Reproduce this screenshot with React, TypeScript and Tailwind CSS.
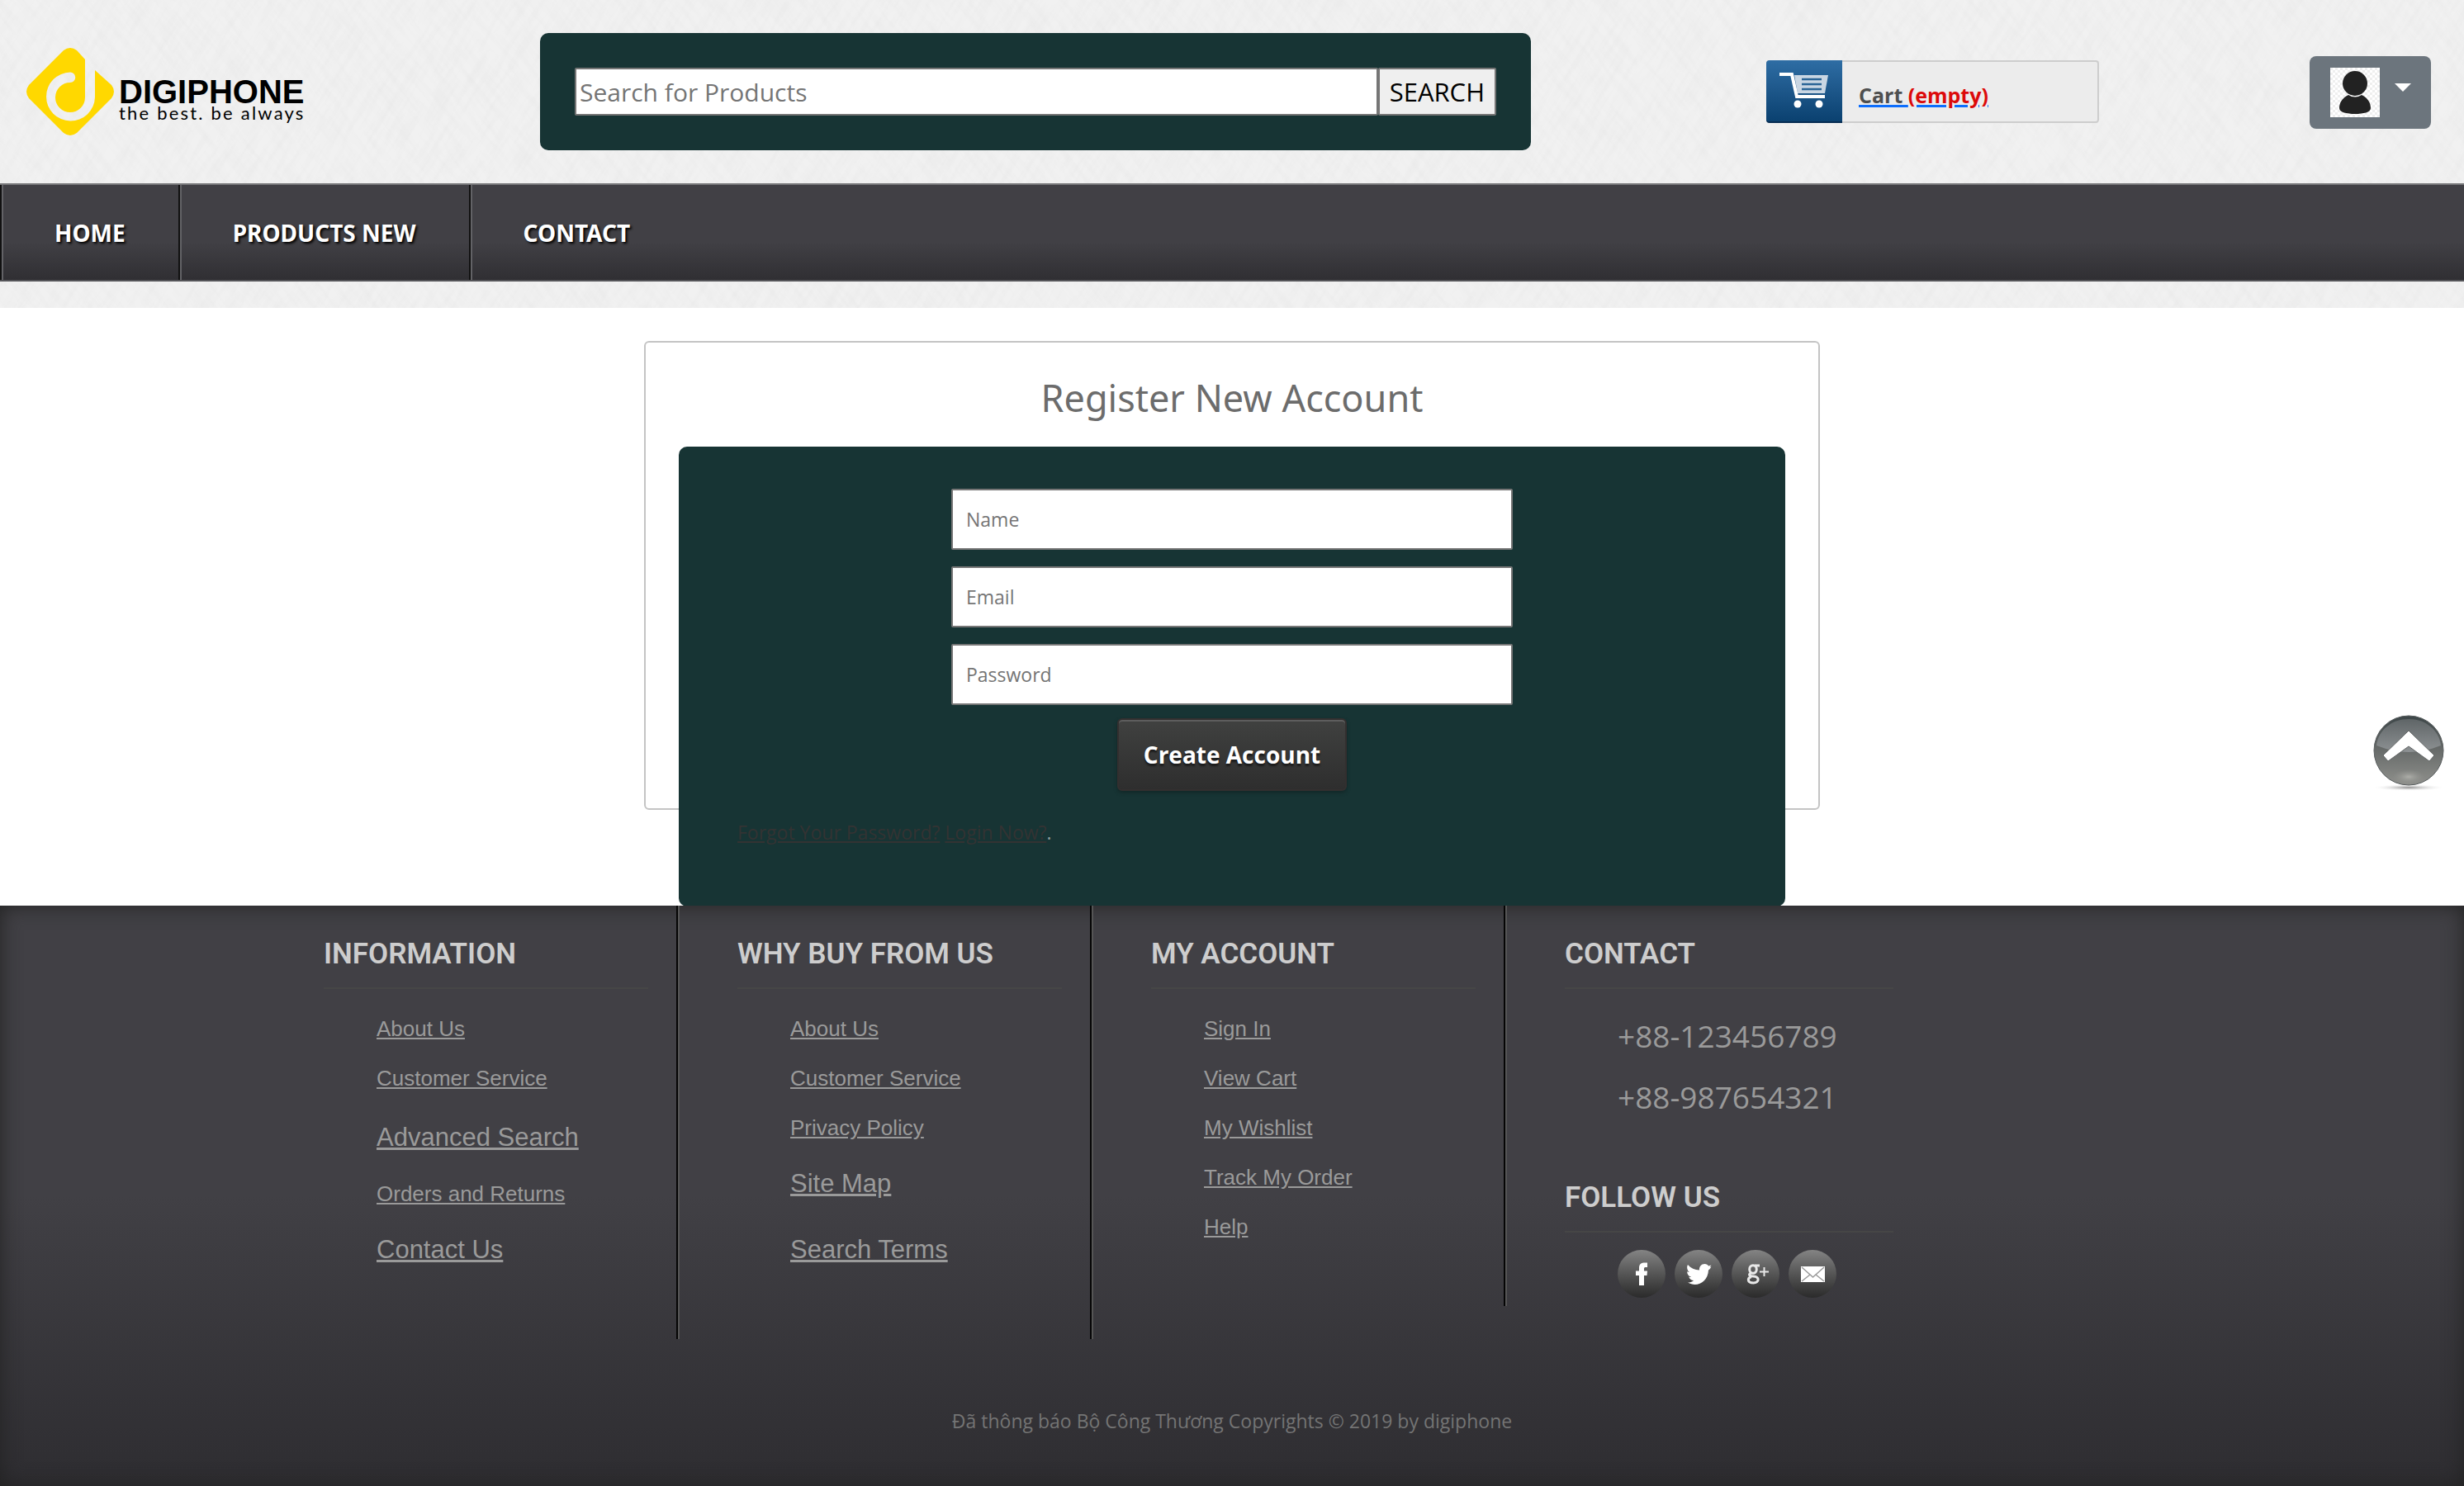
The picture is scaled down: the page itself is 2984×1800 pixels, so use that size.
import React from "react";

const sans = "font-['Open_Sans',sans-serif]";
const display = "font-['Noto_Sans',sans-serif]";

type FooterLink = { label: string; big?: boolean; gap: string };

const information: FooterLink[] = [
  { label: "About Us", gap: "mt-7" },
  { label: "Customer Service", gap: "mt-5" },
  { label: "Advanced Search", big: true, gap: "mt-7" },
  { label: "Orders and Returns", gap: "mt-6" },
  { label: "Contact Us", big: true, gap: "mt-6" },
];
const whyBuy: FooterLink[] = [
  { label: "About Us", gap: "mt-7" },
  { label: "Customer Service", gap: "mt-5" },
  { label: "Privacy Policy", gap: "mt-5" },
  { label: "Site Map", big: true, gap: "mt-6" },
  { label: "Search Terms", big: true, gap: "mt-8" },
];
const account: FooterLink[] = [
  { label: "Sign In", gap: "mt-7" },
  { label: "View Cart", gap: "mt-5" },
  { label: "My Wishlist", gap: "mt-5" },
  { label: "Track My Order", gap: "mt-5" },
  { label: "Help", gap: "mt-5" },
];

function Texture() {
  return (
    <svg className="absolute inset-0 -z-10 size-full" aria-hidden="true">
      <defs>
        <filter id="linen" x="0" y="0" width="100%" height="100%">
          <feTurbulence type="fractalNoise" baseFrequency="0.02 0.15" numOctaves="3" seed="4" stitchTiles="stitch" />
          <feColorMatrix values="0 0 0 0 0.72  0 0 0 0 0.72  0 0 0 0 0.72  2.4 0 0 0 -0.95" />
        </filter>
        <pattern id="linen-tile" width="512" height="512" patternUnits="userSpaceOnUse" patternTransform="rotate(-58)">
          <rect width="512" height="512" filter="url(#linen)" />
        </pattern>
        <pattern id="linen-cross" width="512" height="512" patternUnits="userSpaceOnUse" patternTransform="rotate(52)">
          <rect width="512" height="512" filter="url(#linen)" />
        </pattern>
      </defs>
      <rect width="100%" height="100%" fill="#f1f1f1" />
      <rect width="100%" height="100%" fill="url(#linen-tile)" opacity="0.18" />
      <rect width="100%" height="100%" fill="url(#linen-cross)" opacity="0.16" />
    </svg>
  );
}

function Logo() {
  return (
    <a href="#" className="flex w-[350px] items-center gap-1.5" aria-label="Digiphone home">
      <svg viewBox="0 0 106 106" className="size-[106px] shrink-0" aria-hidden="true">
        <path
          d="M45 3Q53-3 61 3L71 14V60A18 18 0 1 1 53 42A6 6 0 0 0 53 29.500A29.500 29.500 0 1 0 83 60V27L103 45Q109 53 103 61L61 103Q53 109 45 103L3 61Q-3 53 3 45Z"
          fill="#ffd800"
        />
      </svg>
      <span className="flex flex-col pt-5 font-['Liberation_Sans',sans-serif] text-black">
        <span className="text-[40px] leading-8 font-bold">DIGIPHONE</span>
        <span className="font-['Lato',sans-serif] text-[22px] leading-5 tracking-widest">the best. be always</span>
      </span>
    </a>
  );
}

function CartIcon() {
  return (
    <svg viewBox="0 0 60 44" className="h-11 w-[60px]" aria-hidden="true">
      <path d="M18 3H59L55 25H22Z" fill="#c9d6e3" />
      <path d="M27 8H51M27 14H51M27 20H51" stroke="#2a6496" strokeWidth="2.500" />
      <path d="M0 2H15L21 29H55" fill="none" stroke="#fff" strokeWidth="4" />
      <circle cx="22" cy="38" r="4.500" fill="#fff" />
      <circle cx="48" cy="38" r="4.500" fill="#fff" />
    </svg>
  );
}

function Header() {
  return (
    <header className="grid grid-cols-[622fr_1200fr_253fr_403fr_506fr] items-start pt-10 pb-10">
      <div className="pt-[18px] pl-8">
        <Logo />
      </div>
      <form className="ml-8 -mr-8 flex rounded-[10px] bg-[#173434] p-[42px]" onSubmit={(e) => e.preventDefault()}>
        <input
          type="text"
          aria-label="Search for Products"
          placeholder="Search for Products"
          className={`${sans} h-[58px] min-w-0 flex-1 rounded-xs border-2 border-[#767676] bg-white px-1 text-[30px] placeholder:text-[#757575]`}
        />
        <button className={`${sans} h-[58px] rounded-xs border-2 border-[#767676] bg-[#efefef] px-3 text-[31px] leading-9 text-black`}>
          SEARCH
        </button>
      </form>
      <div />
      <div className="mt-[33px] ml-16 -mr-16 flex h-[76px] rounded-sm border-2 border-[#cdcdcd] bg-[#ececec]">
        <span className="-my-0.5 -ml-0.5 flex w-[92px] items-center justify-center rounded-l-sm border-b-2 border-[#062c52] bg-linear-to-b from-[#2e6da4] to-[#0a4170]">
          <CartIcon />
        </span>
        <a href="#" className={`${sans} pt-[22px] pl-5 text-[25px] leading-9 font-bold text-[#4f4f4f] underline decoration-[#0d6efd] decoration-3 underline-offset-2`}>
          Cart <span className="text-[#dc0a0a]">(empty)</span>
        </a>
      </div>
      <div className="mt-7 mr-10 flex justify-end">
        <button className="flex h-[88px] w-[147px] items-center gap-[18px] rounded-lg bg-[#6c757d] pl-[25px]" aria-label="Account menu">
          <svg viewBox="0 0 60 60" className="size-[60px]" aria-hidden="true">
            <defs>
              <pattern id="checks" width="6" height="6" patternUnits="userSpaceOnUse">
                <rect width="6" height="6" fill="#fff" />
                <path d="M0 0h3v3H0zM3 3h3v3H3z" fill="#efefef" />
              </pattern>
            </defs>
            <rect width="60" height="60" fill="url(#checks)" />
            <ellipse cx="30" cy="19" rx="15" ry="15" fill="#222" />
            <path d="M22 33Q30 38 38 33C46 37 49 43 49 49C49 54 40 56 30 56C20 56 11 54 11 49C11 43 14 37 22 33Z" fill="#222" />
          </svg>
          <svg viewBox="0 0 20 10" className="mb-3 h-[10px] w-5" aria-hidden="true">
            <path d="M0 0H20L10 10Z" fill="#fff" />
          </svg>
        </button>
      </div>
    </header>
  );
}

function Nav() {
  return (
    <nav className="flex h-[119px] border-y-2 border-t-[#78787a] border-b-[#545458] bg-linear-to-b from-[#414045] from-60% to-[#302f33]">
      {["HOME", "PRODUCTS NEW", "CONTACT"].map((item) => (
        <a
          key={item}
          href="#"
          className={`${display} flex items-center border-l-2 border-[#111] px-16 text-[28px] font-bold text-white [box-shadow:inset_2px_0_0_#626266] [text-shadow:2px_2px_3px_#000]`}
        >
          {item}
        </a>
      ))}
    </nav>
  );
}

function Register() {
  return (
    <main className="bg-white pt-10">
      <div className="mx-auto h-[568px] w-full max-w-[1424px] rounded-md border-2 border-[#c4c4c4] px-10 pt-9">
        <h1 className={`${display} mb-7 text-center text-[45px] leading-[62px] text-[#6c6c6c]`}>Register New Account</h1>
        <form className="flex h-[557px] flex-col items-center rounded-[10px] bg-[#173434] pt-[51px]" onSubmit={(e) => e.preventDefault()}>
          <div className="flex w-[680px] flex-col gap-5">
            {["Name", "Email", "Password"].map((field) => (
              <input
                key={field}
                type={field === "Password" ? "password" : "text"}
                aria-label={field}
                placeholder={field}
                className={`${sans} h-[74px] w-full rounded-xs border-2 border-[#767676] bg-white px-4 text-[23px] placeholder:text-[#757575]`}
              />
            ))}
          </div>
          <button
            className={`${sans} mt-4 h-[88px] w-[278px] rounded-md border-2 border-[#332f2f] bg-linear-to-b from-[#404140] to-[#2e2e2e] text-[28px] font-bold text-white [box-shadow:inset_0_2px_0_#5d5d5d,0_2px_4px_#122626] [text-shadow:0_3px_2px_#1c1c1c]`}
          >
            Create Account
          </button>
          <p className={`${sans} mt-8 self-start pl-[71px] text-[23px] leading-9 text-[#8a9a9a]`}>
            <a href="#" className="text-[#333] underline">Forgot Your Password?</a>{" "}
            <a href="#" className="text-[#333] underline">Login Now?</a>.
          </p>
        </form>
      </div>
    </main>
  );
}

function Heading({ children }: { children: string }) {
  return (
    <h2 className="border-b-2 border-[#464646] pb-4 font-['Roboto',sans-serif] text-[35px] leading-12 font-semibold text-[#cdcdcd]">{children}</h2>
  );
}

function Column({ title, links, short }: { title: string; links: FooterLink[]; short?: boolean }) {
  return (
    <section
      className={`${short ? "h-[485px]" : "h-[525px]"} border-r-2 border-[#555] pt-[35px] pr-9 pl-[70px] [box-shadow:inset_-2px_0_0_#050505]`}
    >
      <Heading>{title}</Heading>
      <ul className="pl-16">
        {links.map((link) => (
          <li key={link.label} className={`${link.gap} font-['Liberation_Sans',sans-serif] text-[#9a9a9a]`}>
            <a href="#" className={link.big ? "block text-[31px] leading-12 underline" : "block text-[26px] leading-10 underline"}>
              {link.label}
            </a>
          </li>
        ))}
      </ul>
    </section>
  );
}

const socials = [
  { name: "Facebook", path: <path d="M26 43V31H22V25.500H26V22C26 17 28.500 15.500 33 15.500H36V21H34C32.500 21 32 21.500 32 23V25.500H36L35.500 31H32V43Z" /> },
  {
    name: "Twitter",
    path: (
      <path d="M44.500 18.500C43 19 42 19.300 41 19.400C40.500 18 38.500 17 36.500 17C32.500 17 29.500 20.500 30 24.500C24.500 24.300 19.500 22 16 18C14.400 20.800 15.200 25 18 27C17 27 16 26.600 15.100 26.200C15.100 29.600 17.200 32 20.100 32.700C19.200 33 18.200 33 17.300 32.800C18.100 35.200 20.400 37 23.100 37C21 39 18.500 39.500 16 39.600C27 46 40.500 39 41 24.500C42.500 23.500 43.500 22 44.500 20.500L42.500 21Z" />
    ),
  },
  { name: "Google Plus", path: null },
  { name: "Email", path: <path d="M15 20H44V39H15Z" /> },
];

function Social() {
  return (
    <ul className="flex gap-[11px] pt-[21px] pl-16">
      {socials.map((s) => (
        <li key={s.name}>
          <a href="#" aria-label={s.name} className="flex size-[58px] items-center justify-center rounded-full bg-linear-to-b from-[#848484] to-[#2b2b2b]">
            <svg viewBox="0 0 58 58" className="size-full" fill="#fff" aria-hidden="true">
              {s.path}
              {s.name === "Email" && <path d="M16 21L29.500 33L43 21M16 38L26 30M43 38L33 30" fill="none" stroke="#999" strokeWidth="1.500" />}
              {s.name === "Google Plus" && (
                <g fill="none" stroke="#e8e8e8" strokeWidth="3">
                  <ellipse cx="26" cy="23.500" rx="4.300" ry="4.800" />
                  <path d="M28 19H34M23.500 28C19.500 30 22 32 26.500 32C34.500 32.500 33.500 40 26.500 40C18.500 40 19 34 24 32.500" />
                  <path d="M39.500 21V32M34 26.500H45" strokeWidth="2" />
                </g>
              )}
            </svg>
          </a>
        </li>
      ))}
    </ul>
  );
}

function Footer() {
  return (
    <footer className="bg-linear-to-b from-[#414045] from-50% to-[#2e2d31] pb-[61px] [box-shadow:inset_0_0_24px_#222]">
      <div className="grid grid-cols-[322fr_501fr_501fr_501fr_468fr_691fr] items-start">
        <div />
        <Column title="INFORMATION" links={information} />
        <Column title="WHY BUY FROM US" links={whyBuy} />
        <Column title="MY ACCOUNT" links={account} short />
        <section className="pt-[35px] pl-[70px]">
          <Heading>CONTACT</Heading>
          <ul className={`${sans} pt-5 pl-16 text-[37px] text-[#9a9a9a]`}>
            <li className="leading-[74px]">+88-123456789</li>
            <li className="leading-[74px]">+88-987654321</li>
          </ul>
          <div className="mt-[61px]">
            <Heading>FOLLOW US</Heading>
          </div>
          <Social />
        </section>
      </div>
      <p className={`${sans} mt-[81px] text-center text-[23px] leading-9 text-[#747474]`}>
        Đã thông báo Bộ Công Thương Copyrights © 2019 by digiphone
      </p>
    </footer>
  );
}

function ScrollTop() {
  return (
    <button className="fixed top-[865px] right-[22px] h-24 w-[90px]" aria-label="Back to top">
      <svg viewBox="0 0 90 96" className="size-full" aria-hidden="true">
        <defs>
          <linearGradient id="ball" x1="0" y1="0" x2="0" y2="1">
            <stop offset="0" stopColor="#3c4547" />
            <stop offset="0.450" stopColor="#646867" />
            <stop offset="1" stopColor="#8f908c" />
          </linearGradient>
          <linearGradient id="gloss" x1="0" y1="0" x2="0" y2="1">
            <stop offset="0" stopColor="#5f6567" />
            <stop offset="1" stopColor="#8d9193" />
          </linearGradient>
          <radialGradient id="ground">
            <stop offset="0" stopColor="#8a8a8a" />
            <stop offset="1" stopColor="#fff" stopOpacity="0" />
          </radialGradient>
          <radialGradient id="glow">
            <stop offset="0" stopColor="#adaea9" />
            <stop offset="1" stopColor="#8f908c" stopOpacity="0" />
          </radialGradient>
        </defs>
        <ellipse cx="45" cy="89" rx="44" ry="4" fill="url(#ground)" />
        <circle cx="45" cy="44" r="42" fill="url(#ball)" stroke="#565b5c" strokeWidth="1" />
        <path d="M6 38C8 19 25 6 45 6S82 19 84 38Q64 46 45 46T6 38Z" fill="url(#gloss)" />
        <ellipse cx="45" cy="76" rx="20" ry="9" fill="url(#glow)" />
        <path d="M45 20L76 50L70 57L45 39L20 57L14 50Z" fill="#fff" stroke="#626666" strokeWidth="1" />
      </svg>
    </button>
  );
}

export default function App() {
  return (
    <div className="bg-white">
      <div className="relative isolate overflow-hidden pb-8">
        <Texture />
        <Header />
        <Nav />
      </div>
      <Register />
      <div className="mt-[116px]">
        <Footer />
      </div>
      <ScrollTop />
    </div>
  );
}
